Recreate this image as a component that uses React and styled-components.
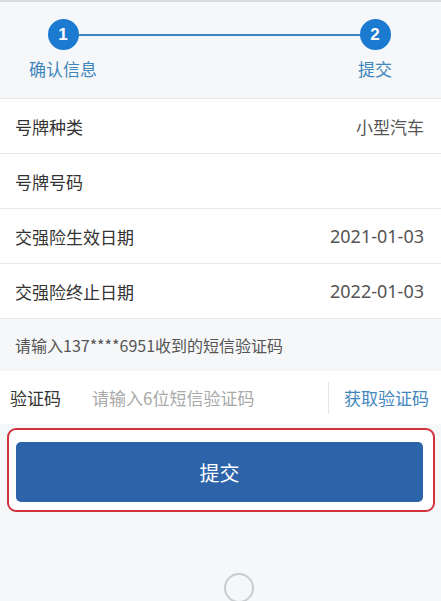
import React from 'react';
import styled, { createGlobalStyle } from 'styled-components';

const GlobalStyle = createGlobalStyle`
  html, body {
    margin: 0;
    padding: 0;
    background: #f5f7f9;
    font-family: "Noto Sans CJK SC", "Noto Sans", sans-serif;
  }
`;

const Page = styled.div`
  width: 441px;
  height: 601px;
  background: #f5f7f9;
  border-top: 2px solid #d8dbdf;
  box-sizing: border-box;
  overflow: hidden;
  display: flex;
  flex-direction: column;
`;

const Steps = styled.div`
  height: 97px;
  padding: 17px 48px 0 27px;
  box-sizing: border-box;
  border-bottom: 1px solid #e6e8eb;
  display: flex;
`;

const Track = styled.div`
  position: relative;
  flex: 1;
  display: flex;
  justify-content: space-between;
`;

const Line = styled.div`
  position: absolute;
  top: 15px;
  left: 37px;
  right: 18px;
  height: 2px;
  background: #3a86c4;
`;

const Step = styled.div`
  position: relative;
  z-index: 1;
  display: flex;
  flex-direction: column;
  align-items: center;
  width: ${(p) => p.width}px;
`;

const Dot = styled.div`
  width: 31px;
  height: 31px;
  border-radius: 50%;
  background: #1b7bd0;
  color: #fff;
  font-family: "Liberation Sans", sans-serif;
  font-weight: bold;
  font-size: 17px;
  display: flex;
  align-items: center;
  justify-content: center;
`;

const StepLabel = styled.div`
  margin-top: 7px;
  font-size: 17px;
  color: #3f86bd;
  line-height: 24px;
`;

const List = styled.div`
  background: #fff;
`;

const Row = styled.div`
  height: 55px;
  padding: 0 17px 0 15px;
  display: flex;
  align-items: center;
  justify-content: space-between;
  border-bottom: 1px solid #e8e9eb;
  box-sizing: border-box;
  font-size: 17px;
`;

const Label = styled.span`
  color: #333;
`;

const Value = styled.span`
  color: #555;
  font-family: ${(p) => (p.mono ? '"Noto Sans", "Noto Sans CJK SC", sans-serif' : 'inherit')};
  font-size: ${(p) => (p.mono ? '18px' : '17px')};
`;

const Notice = styled.div`
  height: 52px;
  padding-left: 15px;
  display: flex;
  align-items: center;
  font-size: 16px;
  color: #555;
`;

const CodeRow = styled.div`
  height: 53px;
  background: #fff;
  display: flex;
  align-items: center;
  padding: 0 12px 0 10px;
  font-size: 17px;
`;

const CodeLabel = styled.span`
  color: #333;
  width: 82px;
`;

const CodeInput = styled.input`
  flex: 1;
  border: none;
  outline: none;
  font-family: inherit;
  font-size: 17px;
  color: #333;
  background: transparent;
  padding: 0;
  &::placeholder {
    color: #a9a9a9;
  }
`;

const Divider = styled.div`
  width: 1px;
  height: 32px;
  background: #e4e4e4;
  margin-right: 15px;
`;

const GetCode = styled.span`
  color: #3f86bd;
`;

const Highlight = styled.div`
  margin: 4px 6px 0 7px;
  border: 2px solid #d2323c;
  border-radius: 9px;
  padding: 12px 10px 8px 7px;
  background: #fff;
`;

const Submit = styled.button`
  width: 100%;
  height: 60px;
  border: none;
  border-radius: 5px;
  background: #2c63a9;
  color: #fff;
  font-family: inherit;
  font-size: 20px;
`;

const Footer = styled.div`
  flex: 1;
  display: flex;
  justify-content: center;
  align-items: flex-end;
`;

const HomeRing = styled.div`
  width: 26px;
  height: 26px;
  border-radius: 50%;
  border: 2px solid #c9cbcd;
  margin: 0 0 -2px 36px;
`;

const rows = [
  { label: '号牌种类', value: '小型汽车' },
  { label: '号牌号码', value: '' },
  { label: '交强险生效日期', value: '2021-01-03', mono: true },
  { label: '交强险终止日期', value: '2022-01-03', mono: true },
];

export default function App() {
  return (
    <>
      <GlobalStyle />
      <Page>
        <Steps>
          <Track>
            <Line />
            <Step width={72}>
              <Dot>1</Dot>
              <StepLabel>确认信息</StepLabel>
            </Step>
            <Step width={36}>
              <Dot>2</Dot>
              <StepLabel>提交</StepLabel>
            </Step>
          </Track>
        </Steps>
        <List>
          {rows.map((r) => (
            <Row key={r.label}>
              <Label>{r.label}</Label>
              <Value mono={r.mono}>{r.value}</Value>
            </Row>
          ))}
        </List>
        <Notice>请输入137****6951收到的短信验证码</Notice>
        <CodeRow>
          <CodeLabel>验证码</CodeLabel>
          <CodeInput placeholder="请输入6位短信验证码" />
          <Divider />
          <GetCode>获取验证码</GetCode>
        </CodeRow>
        <Highlight>
          <Submit>提交</Submit>
        </Highlight>
        <Footer>
          <HomeRing />
        </Footer>
      </Page>
    </>
  );
}
